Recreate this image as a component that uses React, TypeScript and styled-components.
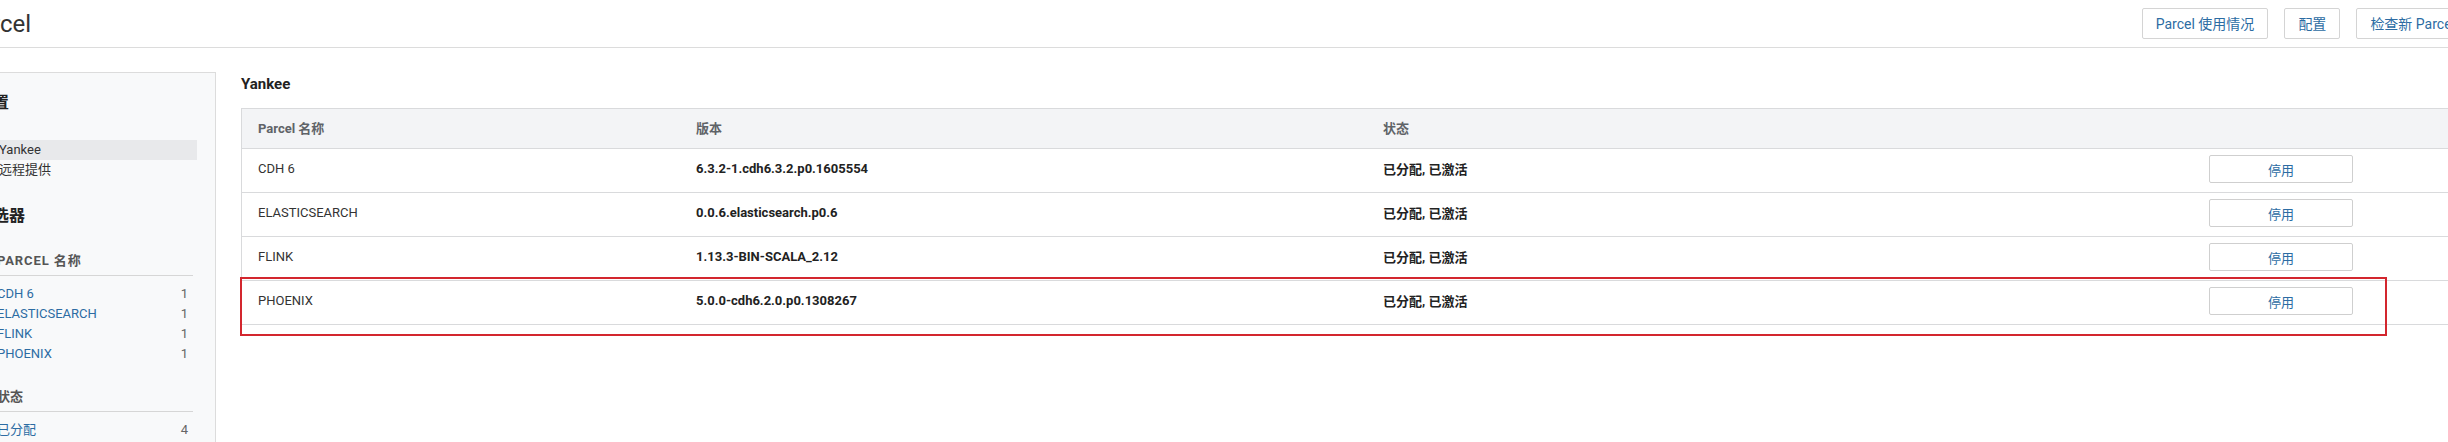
import React from "react";
import styled, { createGlobalStyle } from "styled-components";

const GlobalStyle = createGlobalStyle`
  html, body {
    margin: 0;
    padding: 0;
    background: #ffffff;
    overflow: hidden;
  }
  body {
    font-family: Roboto, "Noto Sans CJK SC", "Liberation Sans", sans-serif;
    color: #333333;
  }
  * { box-sizing: border-box; }
`;

const LINK = "#2c6ca3";

const Page = styled.div`
  width: 2520px;
  margin-left: -42px;
`;

const Header = styled.header`
  height: 48px;
  display: flex;
  align-items: center;
  justify-content: space-between;
  padding: 0 9px 0 6px;
  border-bottom: 1px solid #dcdcdc;
`;

const PageTitle = styled.h1`
  margin: 0;
  font-size: 24px;
  font-weight: 400;
  color: #333333;
  line-height: 28px;
`;

const Toolbar = styled.div`
  display: flex;
  gap: 16px;
  margin-top: -1px;
`;

const ToolButton = styled.button`
  height: 31px;
  padding: 0 13px;
  border: 1px solid #d4d4d4;
  border-radius: 2px;
  background: #ffffff;
  color: ${LINK};
  font-family: inherit;
  font-size: 14px;
  white-space: nowrap;
`;

const Body = styled.div`
  display: flex;
  gap: 25px;
  padding-top: 24px;
`;

const Sidebar = styled.aside`
  width: 258px;
  flex-shrink: 0;
  height: 372px;
  padding: 20px 18px;
  border: 1px solid #dcdcdc;
  border-bottom: none;
  background: #f8f9fa;
  overflow: hidden;
`;

const SectionTitle = styled.h2<{ $gap?: number }>`
  margin: ${(p) => p.$gap ?? 0}px 0 0;
  font-size: 16px;
  line-height: 20px;
  font-weight: 700;
  color: #222222;
`;

const NavList = styled.ul`
  list-style: none;
  margin: 27px 0 0;
  padding: 0;
`;

const NavItem = styled.li<{ $active?: boolean }>`
  height: 20px;
  line-height: 20px;
  padding-left: 22px;
  font-size: 13px;
  color: #333333;
  background: ${(p) => (p.$active ? "#e8e9eb" : "transparent")};
`;

const FacetGroup = styled.div<{ $gap: number }>`
  margin: ${(p) => p.$gap}px 4px 0 20px;
`;

const FacetTitle = styled.div<{ $upper?: boolean }>`
  font-size: 13px;
  line-height: 20px;
  font-weight: 700;
  color: #555555;
  letter-spacing: ${(p) => (p.$upper ? "0.9px" : "0")};
  text-transform: ${(p) => (p.$upper ? "uppercase" : "none")};
  padding-bottom: 4px;
  border-bottom: 1px solid #d6d6d6;
`;

const FacetList = styled.ul`
  list-style: none;
  margin: 8px 0 0;
  padding: 0;
`;

const FacetItem = styled.li`
  display: flex;
  justify-content: space-between;
  height: 20px;
  line-height: 20px;
  font-size: 13px;
  padding-right: 5px;
`;

const FacetLink = styled.span`
  color: ${LINK};
`;

const FacetCount = styled.span`
  color: #666666;
`;

const Main = styled.main`
  flex: 1;
  min-width: 0;
`;

const ClusterTitle = styled.h3`
  margin: 2px 0 0;
  font-size: 15px;
  line-height: 20px;
  font-weight: 700;
  color: #222222;
`;

const TableWrap = styled.div`
  position: relative;
  margin-top: 14px;
`;

const Table = styled.div`
  border-top: 1px solid #d9dadc;
  border-left: 1px solid #d9dadc;
`;

const Row = styled.div<{ $head?: boolean }>`
  display: grid;
  grid-template-columns: 438px 687px 826px 1fr;
  align-items: center;
  height: ${(p) => (p.$head ? 40 : 44)}px;
  padding-bottom: ${(p) => (p.$head ? 2 : 4)}px;
  border-bottom: 1px solid #d9dadc;
  background: ${(p) => (p.$head ? "#f3f4f6" : "#ffffff")};
`;

const HeadCell = styled.div`
  padding-left: 16px;
  font-size: 13px;
  font-weight: 700;
  color: #5f6368;
`;

const Cell = styled.div<{ $strong?: boolean }>`
  padding-left: 16px;
  font-size: 13px;
  font-weight: ${(p) => (p.$strong ? 700 : 400)};
  color: ${(p) => (p.$strong ? "#222222" : "#333333")};
  white-space: nowrap;
`;

const ButtonCell = styled.div`
  padding-left: 16px;
  margin-top: 1px;
`;

const RowButton = styled.button`
  width: 144px;
  height: 28px;
  border: 1px solid #cfcfcf;
  border-radius: 2px;
  background: #ffffff;
  color: ${LINK};
  font-family: inherit;
  font-size: 13px;
`;

const Highlight = styled.div`
  position: absolute;
  left: -1px;
  top: 169px;
  width: 2147px;
  height: 59px;
  border: 2px solid #d3262e;
  pointer-events: none;
`;

const parcels = [
  { name: "CDH 6", version: "6.3.2-1.cdh6.3.2.p0.1605554" },
  { name: "ELASTICSEARCH", version: "0.0.6.elasticsearch.p0.6" },
  { name: "FLINK", version: "1.13.3-BIN-SCALA_2.12" },
  { name: "PHOENIX", version: "5.0.0-cdh6.2.0.p0.1308267" },
];

export default function App() {
  return (
    <>
      <GlobalStyle />
      <Page>
        <Header>
          <PageTitle>Parcel</PageTitle>
          <Toolbar>
            <ToolButton>Parcel 使用情况</ToolButton>
            <ToolButton>配置</ToolButton>
            <ToolButton>检查新 Parcel</ToolButton>
          </Toolbar>
        </Header>
        <Body>
          <Sidebar>
            <SectionTitle>位置</SectionTitle>
            <NavList>
              <NavItem $active>Yankee</NavItem>
              <NavItem>远程提供</NavItem>
            </NavList>
            <SectionTitle $gap={26}>筛选器</SectionTitle>
            <FacetGroup $gap={25}>
              <FacetTitle $upper>Parcel 名称</FacetTitle>
              <FacetList>
                {parcels.map((p) => (
                  <FacetItem key={p.name}>
                    <FacetLink>{p.name}</FacetLink>
                    <FacetCount>1</FacetCount>
                  </FacetItem>
                ))}
              </FacetList>
            </FacetGroup>
            <FacetGroup $gap={23}>
              <FacetTitle>状态</FacetTitle>
              <FacetList>
                <FacetItem>
                  <FacetLink>已分配</FacetLink>
                  <FacetCount>4</FacetCount>
                </FacetItem>
              </FacetList>
            </FacetGroup>
          </Sidebar>
          <Main>
            <ClusterTitle>Yankee</ClusterTitle>
            <TableWrap>
              <Table>
                <Row $head>
                  <HeadCell>Parcel 名称</HeadCell>
                  <HeadCell>版本</HeadCell>
                  <HeadCell>状态</HeadCell>
                  <HeadCell />
                </Row>
                {parcels.map((p) => (
                  <Row key={p.name}>
                    <Cell>{p.name}</Cell>
                    <Cell $strong>{p.version}</Cell>
                    <Cell $strong>已分配, 已激活</Cell>
                    <ButtonCell>
                      <RowButton>停用</RowButton>
                    </ButtonCell>
                  </Row>
                ))}
              </Table>
              <Highlight />
            </TableWrap>
          </Main>
        </Body>
      </Page>
    </>
  );
}
